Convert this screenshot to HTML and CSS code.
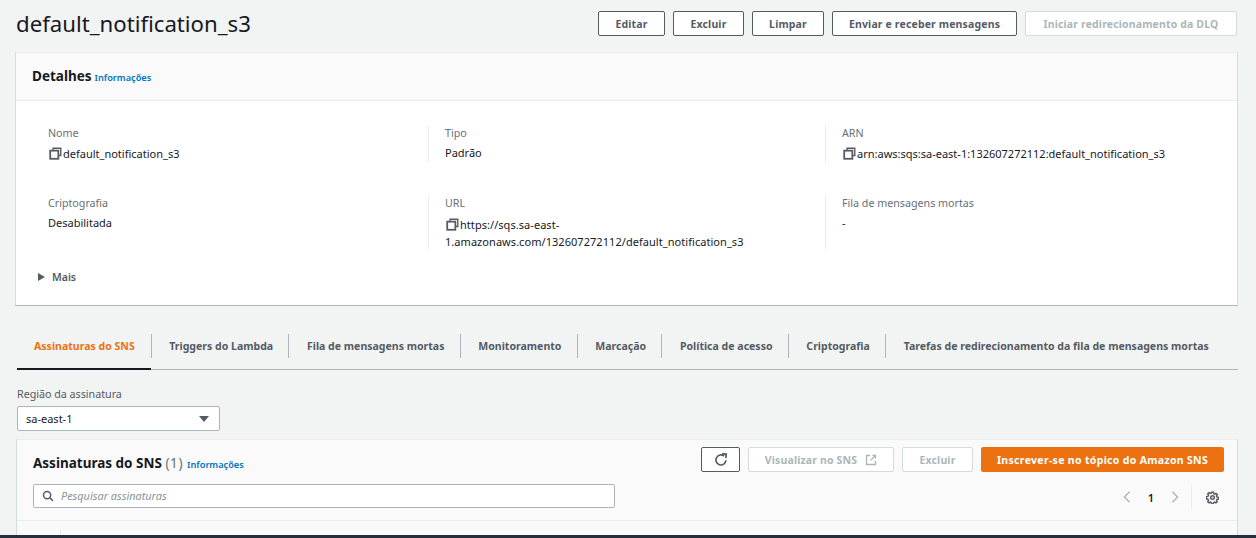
FILE: index.html
```html
<!DOCTYPE html>
<html>
	<head>
		<meta charset="UTF-8">
		<title>default_notification_s3</title>
		<link rel="stylesheet" href="styles.css">
	</head>
	<body>
		<main class="page">
			<header class="page-head">
				<h1>default_notification_s3</h1>
				<div class="actions">
					<button class="btn btn-edit">Editar</button>
					<button class="btn btn-del">Excluir</button>
					<button class="btn btn-clear">Limpar</button>
					<button class="btn btn-send">Enviar e receber mensagens</button>
					<button class="btn btn-off btn-dlq">Iniciar redirecionamento da DLQ</button>
				</div>
			</header>

			<section class="card details">
				<div class="card-head">
					<h2>Detalhes</h2>
					<a class="info">Informações</a>
				</div>
				<div class="card-body">
					<div class="grid">
						<div class="cell">
							<div class="label">Nome</div>
							<div class="value"><svg class="copy" viewBox="0 0 16 16"><use href="#copy-icon"/></svg>default_notification_s3</div>
						</div>
						<div class="cell">
							<div class="label">Tipo</div>
							<div class="value plain">Padrão</div>
						</div>
						<div class="cell">
							<div class="label">ARN</div>
							<div class="value"><svg class="copy" viewBox="0 0 16 16"><use href="#copy-icon"/></svg>arn:aws:sqs:sa-east-1:132607272112:default_notification_s3</div>
						</div>
						<div class="cell">
							<div class="label">Criptografia</div>
							<div class="value plain">Desabilitada</div>
						</div>
						<div class="cell">
							<div class="label">URL</div>
							<div class="value url"><svg class="copy" viewBox="0 0 16 16"><use href="#copy-icon"/></svg>https://sqs.sa-east-<br>1.amazonaws.com/132607272112/default_notification_s3</div>
						</div>
						<div class="cell">
							<div class="label">Fila de mensagens mortas</div>
							<div class="value plain">-</div>
						</div>
					</div>
					<div class="more"><span class="caret"></span>Mais</div>
				</div>
			</section>

			<nav class="tabs">
				<a class="tab active">Assinaturas do SNS</a>
				<a class="tab">Triggers do Lambda</a>
				<a class="tab">Fila de mensagens mortas</a>
				<a class="tab">Monitoramento</a>
				<a class="tab">Marcação</a>
				<a class="tab">Política de acesso</a>
				<a class="tab">Criptografia</a>
				<a class="tab">Tarefas de redirecionamento da fila de mensagens mortas</a>
			</nav>

			<div class="region">
				<div class="region-label">Região da assinatura</div>
				<div class="select">sa-east-1<span class="select-arrow"></span></div>
			</div>

			<section class="card subs">
				<div class="subs-head">
					<div class="subs-left">
						<div class="subs-title">
							<h2>Assinaturas do SNS <span class="count">(1)</span></h2>
							<a class="info">Informações</a>
						</div>
						<div class="search">
							<svg class="search-icon" viewBox="0 0 16 16"><circle cx="6.8" cy="6.8" r="4.8"/><path d="M10.4 10.4 14.5 14.5"/></svg>
							<span class="search-text">Pesquisar assinaturas</span>
						</div>
					</div>
					<div class="subs-right">
						<div class="subs-actions">
							<button class="btn btn-refresh"><svg viewBox="0 0 16 16"><path d="M13.6 8.400A5.700 5.700 0 1 1 11.600 3.600"/><path d="M9.200 1 14 1.200 13.600 5.800"/></svg></button>
							<button class="btn btn-off btn-view">Visualizar no SNS<svg viewBox="0 0 16 16"><path d="M7 2H2V14H14V9"/><path d="M10 2H14V6"/><path d="M14 2 7.500 8.500"/></svg></button>
							<button class="btn btn-off btn-del2">Excluir</button>
							<button class="btn btn-primary">Inscrever-se no tópico do Amazon SNS</button>
						</div>
						<div class="pager">
							<svg class="chev" viewBox="0 0 10 16"><path d="M8 2 2 8 8 14"/></svg>
							<span class="page-no">1</span>
							<svg class="chev" viewBox="0 0 10 16"><path d="M2 2 8 8 2 14"/></svg>
							<span class="pager-sep"></span>
							<svg class="gear" viewBox="0 0 16 16"><circle cx="8" cy="8" r="2.200"/><path d="M6.900 1.500h2.200l.4 1.900 1.200.5 1.600-1 1.600 1.600-1 1.600.5 1.200 1.900.4v2.200l-1.900.4-.5 1.200 1 1.600-1.600 1.600-1.600-1-1.200.5-.4 1.900H6.900l-.4-1.900-1.200-.5-1.600 1-1.600-1.600 1-1.600-.5-1.200-1.900-.4V6.800l1.900-.4.5-1.200-1-1.600 1.600-1.600 1.600 1 1.200-.5z"/></svg>
						</div>
					</div>
				</div>
				<div class="table-head"><span class="table-sep"></span></div>
			</section>
		</main>
		<div class="bottom-bar"></div>

		<svg class="defs" width="0" height="0">
			<symbol id="copy-icon" viewBox="0 0 16 16">
				<path d="M5 4V1.500H14.500V10.500H12" fill="none" stroke="#545b64" stroke-width="1.700"/>
				<rect x="1.500" y="4.500" width="10" height="10" fill="none" stroke="#545b64" stroke-width="2.200"/>
			</symbol>
		</svg>
	</body>
</html>
```

FILE: styles.css
```css
html, body, h1, h2 {
	margin: 0;
	padding: 0;
}
html, body {
	height: 100%;
	overflow: hidden;
}
body {
	display: flex;
	flex-direction: column;
	background: #f2f3f3;
	color: #16191f;
	font-family: "Noto Sans", "Open Sans", sans-serif;
	font-size: 11px;
}
.page {
	flex: 1;
	min-height: 0;
	overflow: hidden;
	padding: 0 18px 0 15px;
}
.bottom-bar {
	height: 3px;
	background: #232f3e;
}
.defs {
	position: absolute;
}

/* top header */
.page-head {
	display: flex;
	justify-content: space-between;
	align-items: center;
	height: 52px;
	padding-left: 1px;
	padding-bottom: 6px;
	box-sizing: border-box;
}
h1 {
	font-size: 22.200px;
	font-weight: 400;
	color: #16191f;
}
.actions {
	display: flex;
	gap: 8px;
	margin-top: 1px;
	margin-right: 1px;
}
.btn {
	height: 25px;
	padding: 0;
	border: 1px solid #545b64;
	border-radius: 2px;
	background: #fff;
	color: #545b64;
	font-family: inherit;
	font-size: 10.500px;
	font-weight: 700;
	letter-spacing: 0.15px;
	box-sizing: border-box;
}
.btn-edit { width: 67px; }
.btn-del { width: 71px; }
.btn-clear { width: 72px; }
.btn-send { width: 185px; }
.btn-dlq { width: 212px; }
.btn-off {
	border-color: #d5dbdb;
	color: #aab7b8;
}

/* cards */
.card {
	background: #fff;
	border: 1px solid #eaeded;
	border-bottom-color: #aab7b8;
	border-right-color: #d5dbdb;
	border-left-color: #d5dbdb;
}
.card-head {
	display: flex;
	align-items: baseline;
	gap: 3px;
	height: 48px;
	padding: 14px 16px 0;
	background: #fafafa;
	border-bottom: 1px solid #eaeded;
	box-sizing: border-box;
}
h2 {
	font-size: 13.500px;
	font-weight: 700;
	color: #16191f;
}
.info {
	color: #0073bb;
	font-size: 9.200px;
	font-weight: 600;
}
.card-body {
	padding: 24px 16px 0;
	height: 204px;
	box-sizing: border-box;
}
.grid {
	display: grid;
	grid-template-columns: 397px 397px 1fr;
	grid-auto-rows: 70px;
}
.cell {
	padding: 0 16px;
	height: 38px;
	line-height: 16px;
	box-sizing: border-box;
}
.cell:nth-child(3n+1),
.cell:nth-child(3n+2) {
	border-right: 1px solid #eaeded;
}
.cell:nth-child(n+4) {
	height: 54px;
}
.label {
	color: #687078;
	font-size: 10.700px;
	margin-bottom: 4px;
	height: 16px;
}
.value {
	padding-top: 1px;
	color: #16191f;
	white-space: nowrap;
}
.plain {
	padding-top: 0;
}
.url {
	line-height: 17px;
	letter-spacing: 0.05px;
}
.copy {
	width: 13px;
	height: 13px;
	vertical-align: -2px;
	margin: 0 1px;
}
.more {
	display: flex;
	align-items: center;
	height: 16px;
	color: #545b64;
	font-size: 10.500px;
	font-weight: 600;
	margin-top: 4px;
	margin-left: 6px;
}
.caret {
	width: 0;
	height: 0;
	border-left: 7px solid #545b64;
	border-top: 4.500px solid transparent;
	border-bottom: 4.500px solid transparent;
	margin-right: 7px;
}

/* tabs */
.tabs {
	display: flex;
	height: 36px;
	margin: 28px 0 0 2px;
	border-bottom: 1px solid #aab7b8;
	box-sizing: border-box;
	width: 1221px;
}
.tab {
	display: flex;
	align-items: center;
	position: relative;
	padding: 0 16.300px 12px 17.500px;
	height: 36px;
	box-sizing: border-box;
	color: #545b64;
	font-size: 10.550px;
	font-weight: 700;
	white-space: nowrap;
}
.tab::after {
	content: "";
	position: absolute;
	right: 0;
	top: 0;
	height: 24px;
	width: 1px;
	background: #aab7b8;
}
.tab:last-child::after {
	display: none;
}
.tab.active {
	color: #ec7211;
	border-bottom: 2px solid #16191f;
	padding: 0 16px 10px 17px;
	margin-right: 1px;
}
.tab.active::after {
	right: -1px;
}

/* region select */
.region {
	margin: 16px 0 0 2px;
}
.region-label {
	color: #545b64;
	font-size: 10.700px;
	line-height: 16px;
	height: 20px;
}
.select {
	display: flex;
	justify-content: space-between;
	align-items: center;
	width: 203px;
	height: 25px;
	padding: 0 10px 0 8px;
	background: #fff;
	border: 1px solid #aab7b8;
	border-radius: 2px;
	box-sizing: border-box;
	color: #16191f;
}
.select-arrow {
	width: 0;
	height: 0;
	border-top: 6px solid #545b64;
	border-left: 5px solid transparent;
	border-right: 5px solid transparent;
}

/* subscriptions */
.subs {
	margin: 8px 0 0 1px;
	background: #fafafa;
	border-bottom: none;
	height: 120px;
}
.subs-head {
	display: flex;
	justify-content: space-between;
	height: 81px;
	padding: 7px 13px 0 16px;
	box-sizing: border-box;
	border-bottom: 1px solid #eaeded;
}
.subs-title {
	display: flex;
	align-items: baseline;
	gap: 4px;
	margin-top: 7px;
	height: 22px;
}
.count {
	color: #687078;
	font-weight: 400;
	letter-spacing: 0.6px;
}
.search {
	display: flex;
	align-items: center;
	width: 582px;
	height: 24px;
	margin-top: 8px;
	padding-left: 8px;
	background: #fff;
	border: 1px solid #aab7b8;
	border-radius: 2px;
	box-sizing: border-box;
	color: #879596;
	font-style: italic;
	font-size: 10.900px;
}
.search-text {
	padding-bottom: 2px;
}
.search-icon {
	width: 12px;
	height: 12px;
	margin-right: 7px;
	fill: none;
	stroke: #545b64;
	stroke-width: 2;
}
.subs-right {
	display: flex;
	flex-direction: column;
	align-items: flex-end;
}
.subs-actions {
	display: flex;
	gap: 8px;
}
.btn-refresh {
	width: 39px;
	display: flex;
	align-items: center;
	justify-content: center;
}
.btn-refresh svg {
	width: 14px;
	height: 14px;
	fill: none;
	stroke: #545b64;
	stroke-width: 1.900;
}
.btn-view {
	display: flex;
	align-items: center;
	justify-content: center;
	gap: 8px;
	width: 146px;
}
.btn-view svg {
	width: 12px;
	height: 12px;
	fill: none;
	stroke: #aab7b8;
	stroke-width: 1.800;
}
.btn-del2 {
	width: 71px;
}
.btn-primary {
	width: 243px;
	background: #ec7211;
	border-color: #ec7211;
	color: #fff;
	letter-spacing: 0.32px;
}
.pager {
	display: flex;
	align-items: center;
	height: 24px;
	margin-top: 13px;
}
.chev {
	width: 10px;
	height: 14px;
	fill: none;
	stroke: #aab7b8;
	stroke-width: 1.600;
}
.page-no {
	width: 38px;
	text-align: center;
	font-weight: 600;
	color: #16191f;
}
.pager-sep {
	width: 1px;
	height: 24px;
	background: #eaeded;
	margin: 0 14px 0 11px;
}
.gear {
	width: 13px;
	height: 13px;
	fill: none;
	stroke: #545b64;
	stroke-width: 1.800;
	margin-right: 5px;
}
.table-head {
	height: 30px;
	background: #fafafa;
}
.table-sep {
	display: block;
	width: 1px;
	height: 30px;
	margin: 9px 0 0 43px;
	background: #eaeded;
}
```
